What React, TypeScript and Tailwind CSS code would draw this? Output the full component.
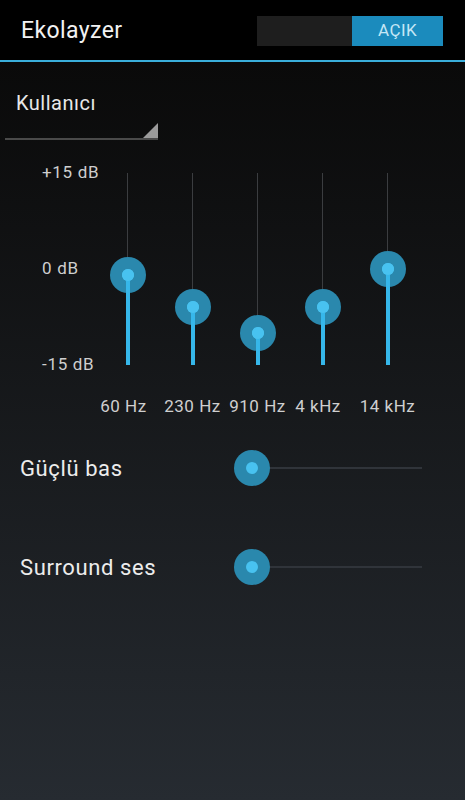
import React from 'react';

const bands = [
    { label: '60 Hz', y: 102, shift: 'pr-[8px]' },
    { label: '230 Hz', y: 134, shift: '' },
    { label: '910 Hz', y: 160, shift: '' },
    { label: '4 kHz', y: 134, shift: 'pr-[9px]' },
    { label: '14 kHz', y: 96, shift: '' },
];

function Thumb() {
    return (
        <div className="w-[36px] h-[36px] rounded-full bg-[#2a88ad] flex items-center justify-center">
            <div className="w-[12px] h-[12px] rounded-full bg-[#48c2f0]" />
        </div>
    );
}

function BandSlider({ y }: { y: number }) {
    // y = thumb centre measured from top of the 192px track
    return (
        <div className="relative w-[36px] h-[192px] mt-[11px]">
            <div className="absolute left-[17px] top-0 bottom-0 w-px bg-[#3b3d40]" />
            <div className="absolute left-0" style={{ top: y - 18 }}>
                <Thumb />
            </div>
            <div
                className="absolute left-[16px] bottom-0 w-[4px] bg-[#36b7ea]"
                style={{ top: y }}
            />
            <div className="absolute left-[12px] w-[12px] h-[12px] rounded-full bg-[#48c2f0]" style={{ top: y - 6 }} />
        </div>
    );
}

function HSlider() {
    return (
        <div className="relative w-[188px] h-[36px]">
            <div className="absolute left-[18px] right-0 top-[17px] h-[2px] bg-[#30343a]" />
            <div className="absolute left-0 top-0">
                <Thumb />
            </div>
        </div>
    );
}

export default function App() {
    return (
        <div className="w-[465px] h-[800px] flex flex-col font-['Roboto',sans-serif] overflow-hidden">
            <div className="h-[60px] bg-black flex items-center justify-between pl-[21px] pr-[22px]">
                <h1 className="text-[23px] tracking-[0.4px] text-[#f2f2f2] pt-[2px]">Ekolayzer</h1>
                <div className="flex h-[30px] mt-[2px]">
                    <div className="w-[95px] bg-[#1e1e1e]" />
                    <div className="w-[91px] bg-[#1b8bbd] flex items-center justify-center text-[17px] tracking-[0.4px] text-[#c4e6f5]">
                        AÇIK
                    </div>
                </div>
            </div>
            <div className="h-[2px] bg-[#3aaedb]" />

            <div className="flex-1 flex flex-col bg-gradient-to-b from-[#0a0a0a] to-[#262b31]">
                <div className="relative ml-[5px] w-[153px] h-[78px] border-b-2 border-[#4a4a4a]">
                    <div className="pl-[11px] pt-[29px] text-[20px] tracking-[0.5px] leading-[24px] text-[#e8e8e8]">Kullanıcı</div>
                    <svg className="absolute right-0 bottom-0" width="15" height="15" viewBox="0 0 15 15">
                        <polygon points="0,15 15,15 15,0" fill="#9b9b9b" />
                    </svg>
                </div>

                <div className="flex mt-[22px] h-[212px]">
                    <div className="w-[95px] pl-[42px] flex flex-col justify-between text-[17px] tracking-[0.7px] leading-[20px] text-[#cfcfcf] whitespace-nowrap">
                        <span>+15 dB</span>
                        <span>0 dB</span>
                        <span>-15 dB</span>
                    </div>
                    {bands.map((b) => (
                        <div key={b.label} className="w-[65px] flex justify-center">
                            <BandSlider y={b.y} />
                        </div>
                    ))}
                </div>

                <div className="flex pl-[95px] mt-[22px] text-[17px] tracking-[0.5px] leading-[20px] text-[#cfcfcf]">
                    {bands.map((b) => (
                        <div key={b.label} className={`w-[65px] text-center whitespace-nowrap ${b.shift}`}>
                            {b.label}
                        </div>
                    ))}
                </div>

                <div className="flex items-center h-[40px] mt-[32px] pl-[20px]">
                    <span className="w-[214px] text-[22px] tracking-[0.6px] text-[#ececec]">Güçlü bas</span>
                    <HSlider />
                </div>
                <div className="flex items-center h-[40px] mt-[59px] pl-[20px]">
                    <span className="w-[214px] text-[22px] tracking-[0.6px] text-[#ececec]">Surround ses</span>
                    <HSlider />
                </div>
            </div>
        </div>
    );
}
